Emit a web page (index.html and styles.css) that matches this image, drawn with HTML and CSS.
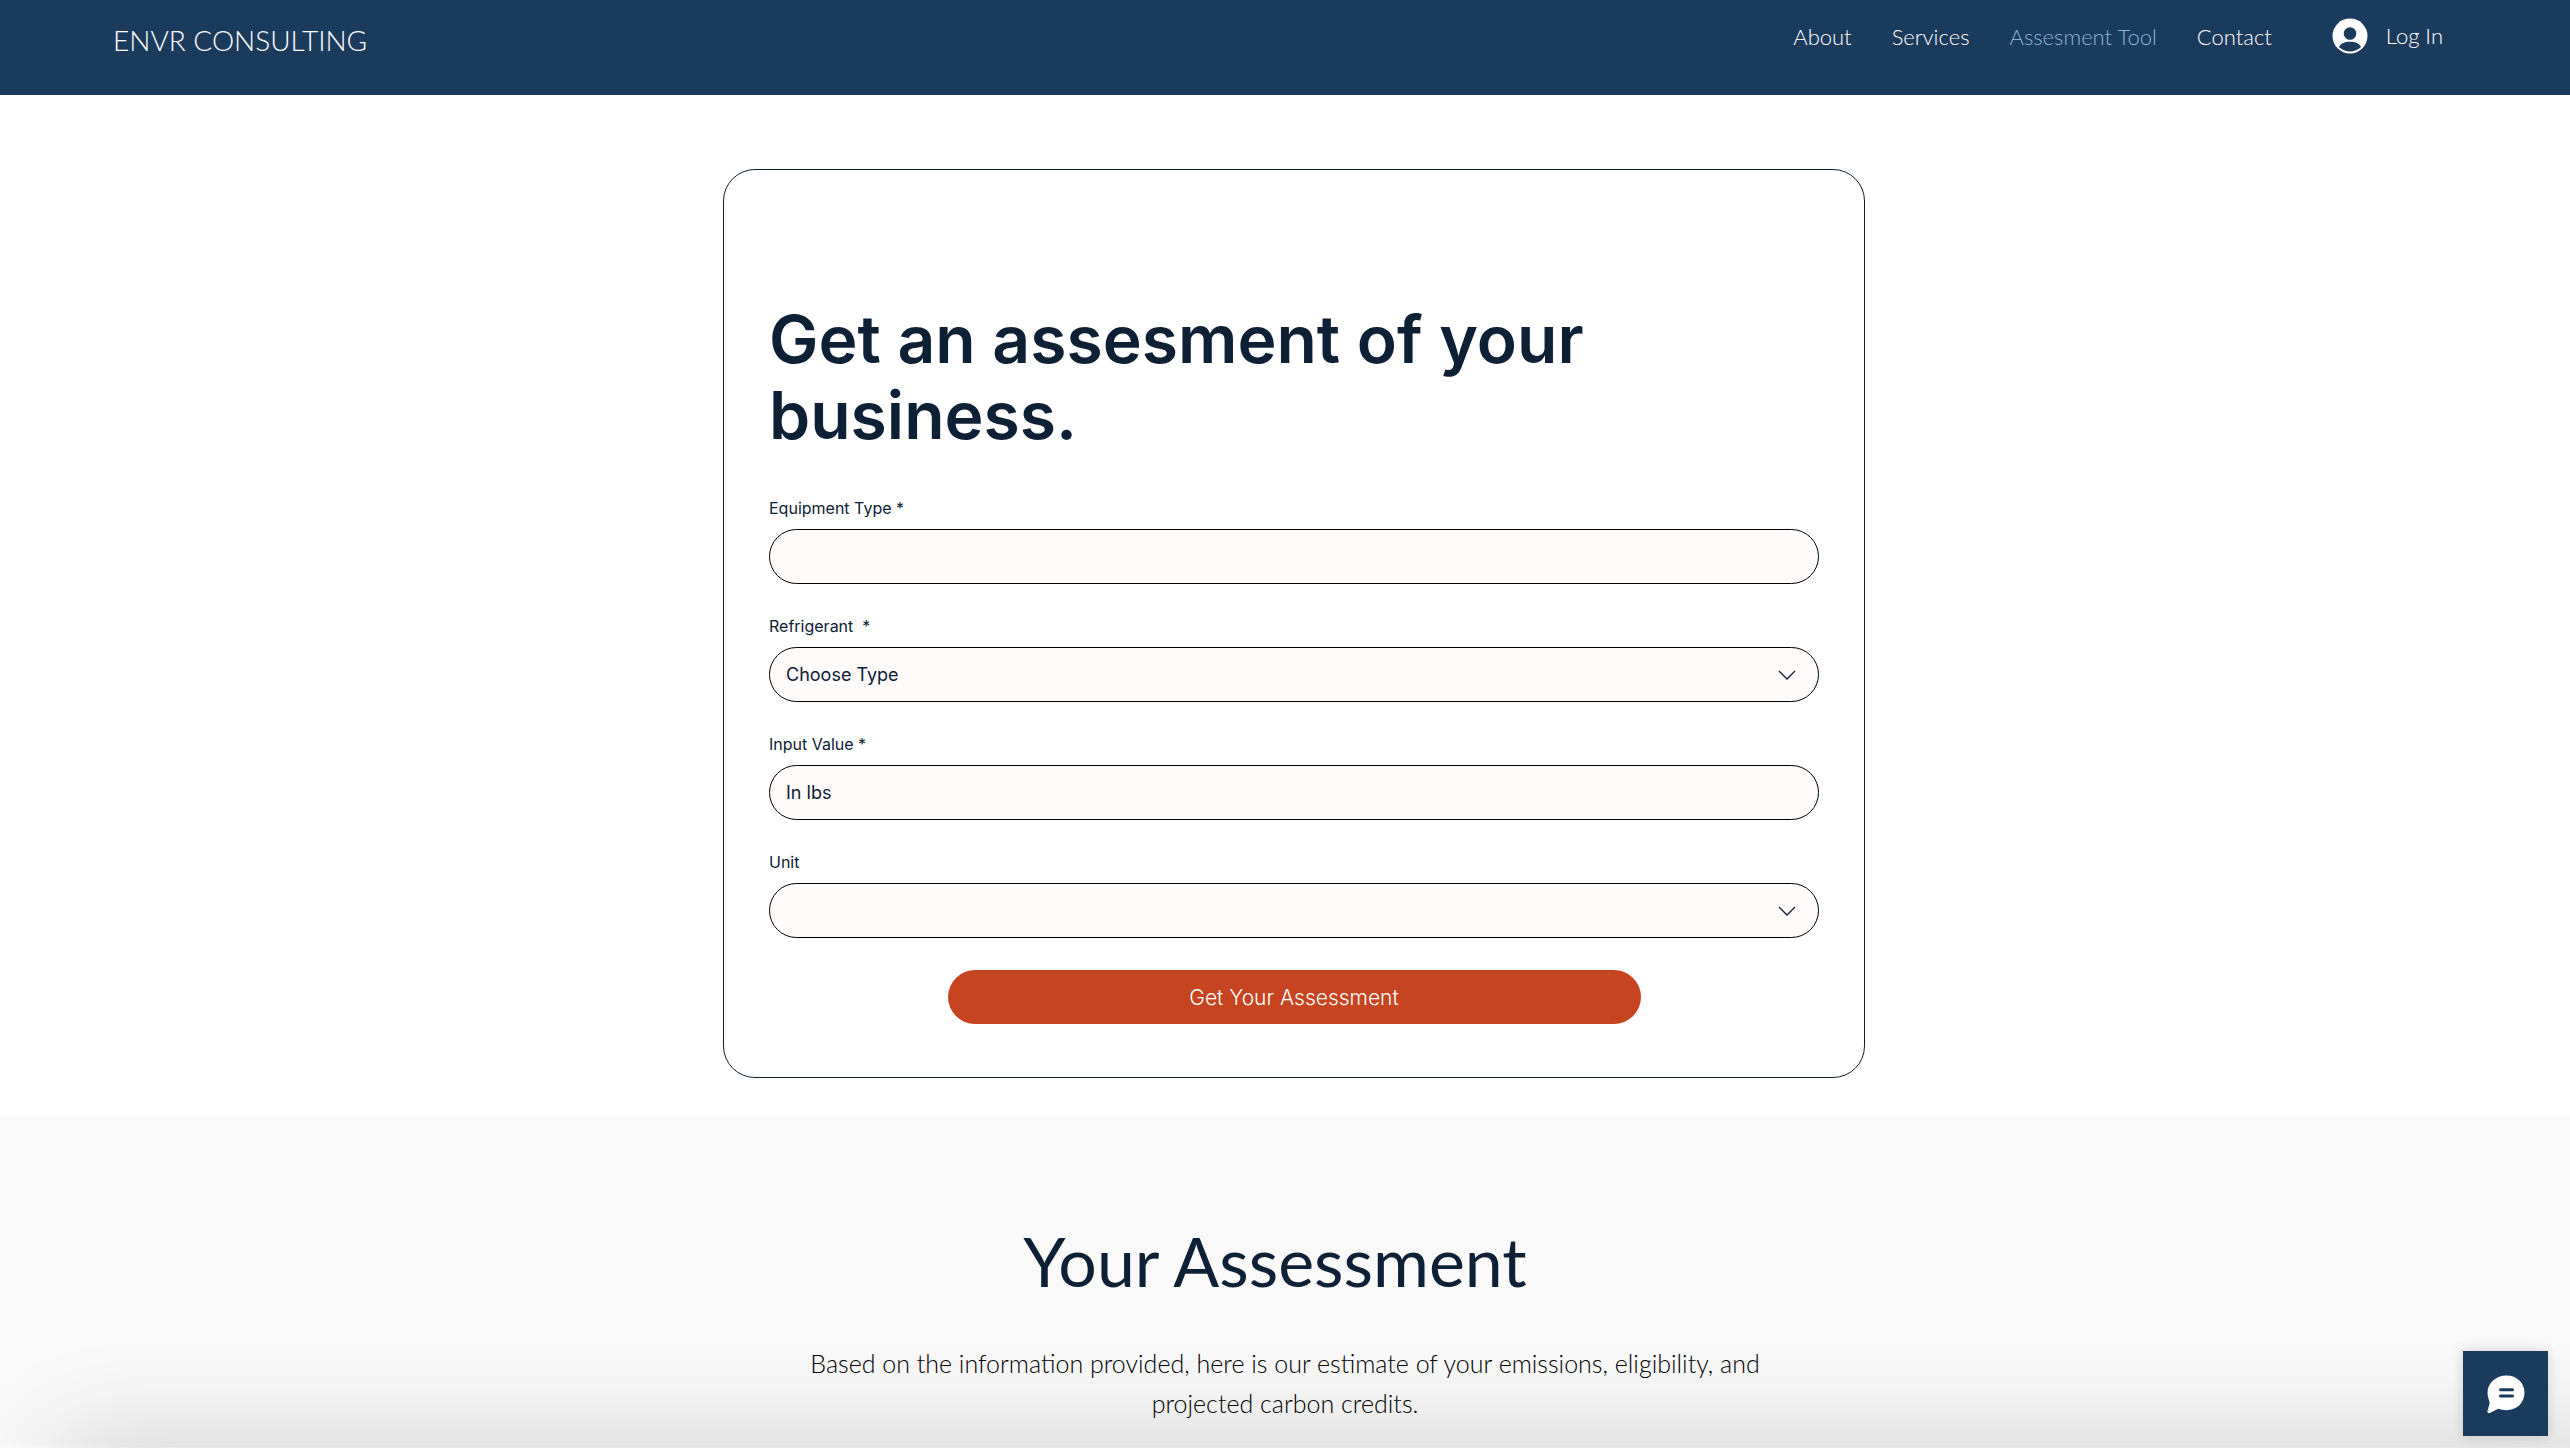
FILE: index.html
```html
<!DOCTYPE html>
<html lang="en">
<head>
<meta charset="utf-8">
<meta name="viewport" content="width=device-width, initial-scale=1">
<title>Assesment Tool | ENVR Consulting</title>
<link rel="stylesheet" href="styles.css">
</head>
<body>
<header class="site-header">
  <a class="brand" href="#">ENVR CONSULTING</a>
  <nav class="site-nav">
    <a class="nav-link" href="#">About</a>
    <a class="nav-link" href="#">Services</a>
    <a class="nav-link nav-link-current" href="#" aria-current="page">Assesment Tool</a>
    <a class="nav-link" href="#">Contact</a>
  </nav>
  <button class="login" type="button">
    <svg class="login-icon" viewBox="0 0 36 36" aria-hidden="true">
      <circle cx="18" cy="18" r="17.5" fill="#fff"/>
      <circle cx="18" cy="15.5" r="6.3" fill="#1b3b5c"/>
      <path d="M7 29C8.500 25.500 12.500 23.700 18 23.700S27.500 25.500 29 29A15.800 15.800 0 0 1 7 29Z" fill="#1b3b5c"/>
    </svg>
    <span>Log In</span>
  </button>
</header>

<main>
  <section class="tool">
    <form class="card">
      <h1 class="card-title">Get an assesment of your business.</h1>
      <div class="field">
        <label class="field-label" for="equipment">Equipment Type *</label>
        <input class="field-control" id="equipment" type="text">
      </div>
      <div class="field">
        <label class="field-label" for="refrigerant">Refrigerant &nbsp;*</label>
        <div class="select-wrap">
          <select class="field-control field-select" id="refrigerant">
            <option>Choose Type</option>
          </select>
          <svg class="chevron" viewBox="0 0 18 10" aria-hidden="true"><path d="M1 1l8 8 8-8"/></svg>
        </div>
      </div>
      <div class="field">
        <label class="field-label" for="value">Input Value *</label>
        <input class="field-control" id="value" type="text" placeholder="In lbs">
      </div>
      <div class="field">
        <label class="field-label" for="unit">Unit</label>
        <div class="select-wrap">
          <select class="field-control field-select" id="unit">
            <option></option>
          </select>
          <svg class="chevron" viewBox="0 0 18 10" aria-hidden="true"><path d="M1 1l8 8 8-8"/></svg>
        </div>
      </div>
      <button class="submit" type="submit">Get Your Assessment</button>
    </form>
  </section>

  <section class="results">
    <h2 class="results-title">Your Assessment</h2>
    <p class="results-text">Based on the information provided, here is our estimate of your emissions, eligibility, and projected carbon credits.</p>
  </section>
</main>

<div class="bottom-shade"></div>
<button class="chat" type="button" aria-label="Open chat">
  <svg class="chat-icon" viewBox="0 0 38 38" aria-hidden="true">
    <path d="M19.500 .5C30 .5 37.500 8 37.500 17.800S30 35.200 19.500 35.200C16.500 35.200 13.700 34.600 11.300 33.800L3.200 37.800C1.500 38.600 0 37.500 .5 35.700L2.600 28.500C3 26.500 .5 23 .5 17.800C.5 8 9 .5 19.500 .5Z" fill="#fff"/>
    <path d="M13.500 14.800H25.500M13.500 21H25.500" stroke="#1b3b5c" stroke-width="3" stroke-linecap="round"/>
  </svg>
</button>
</body>
</html>
```
FILE: styles.css
```css
* {
  box-sizing: border-box;
}

body {
  margin: 0;
  background: #fff;
  color: #0d2035;
  font-family: Inter, "Liberation Sans", sans-serif;
}

.site-header {
  display: flex;
  align-items: flex-start;
  min-height: 95px;
  padding: 16px 127px 16px 113px;
  background: #1b3b5c;
  font-family: Lato, sans-serif;
  font-weight: 300;
}

.brand {
  margin-right: auto;
  padding-top: 7px;
  color: #fff;
  font-size: 28px;
  line-height: 34px;
  text-decoration: none;
}

.site-nav {
  display: flex;
  gap: 40px;
}

.nav-link {
  color: #fff;
  font-size: 22px;
  line-height: 42px;
  text-decoration: none;
}

.nav-link-current {
  color: #8fb2d8;
}

.login {
  display: flex;
  align-items: center;
  gap: 18px;
  margin-left: 60px;
  padding: 0;
  border: 0;
  background: none;
  color: #fff;
  font: inherit;
  font-size: 22px;
  line-height: 40px;
}

.login-icon {
  width: 36px;
  height: 36px;
}

.tool {
  padding: 74px 0 38px 18px;
}

.card {
  width: 1142px;
  max-width: 100%;
  margin: 0 auto;
  padding: 131px 45px 53px;
  border: 1px solid #0d2035;
  border-radius: 32px;
}

.card-title {
  margin: 0 0 44px;
  font-size: 66px;
  font-weight: 600;
  line-height: 76px;
}

.field {
  margin-bottom: 31px;
}

.field-label {
  display: block;
  margin-bottom: 10px;
  font-size: 16px;
  line-height: 22px;
}

.field-control {
  display: block;
  width: 100%;
  height: 55px;
  padding: 0 16px;
  border: 1px solid #000;
  border-radius: 28px;
  background: #fffbfa;
  color: #0d2035;
  font-family: inherit;
  font-size: 18px;
}

.field-control::placeholder {
  color: #0d2035;
  opacity: 1;
}

.select-wrap {
  display: grid;
  align-items: center;
}

.field-select {
  grid-area: 1 / 1;
  appearance: none;
}

.chevron {
  grid-area: 1 / 1;
  justify-self: end;
  width: 18px;
  height: 10px;
  margin-right: 23px;
  fill: none;
  stroke: #0d2035;
  stroke-width: 1.3;
  pointer-events: none;
}

.submit {
  display: block;
  width: 66%;
  height: 54px;
  margin: 32px auto 0;
  border: 0;
  border-radius: 27px;
  background: #c64420;
  color: #fff;
  font-family: inherit;
  font-size: 21px;
  font-weight: 300;
}

.results {
  padding: 101px 24px 24px;
  background: #f9f9f9;
  text-align: center;
}

.results-title {
  margin: 0 20px 38px 0;
  font-family: Lato, sans-serif;
  font-size: 68px;
  font-weight: 400;
  line-height: 88px;
}

.results-text {
  max-width: 980px;
  margin: 0 auto;
  color: #000;
  font-family: Lato, sans-serif;
  font-size: 25px;
  font-weight: 300;
  line-height: 40px;
}

.bottom-shade {
  position: fixed;
  top: 100%;
  right: -60px;
  left: 60px;
  height: 200px;
  box-shadow: 0 0 110px rgba(0, 0, 0, 0.18);
  pointer-events: none;
}

.chat {
  position: fixed;
  right: 22px;
  bottom: 12px;
  display: grid;
  place-items: center;
  width: 85px;
  height: 85px;
  padding: 0;
  border: 0;
  background: #1b3b5c;
  box-shadow: 0 0 12px rgba(0, 0, 0, 0.15);
}

.chat-icon {
  width: 38px;
  height: 38px;
}
```
